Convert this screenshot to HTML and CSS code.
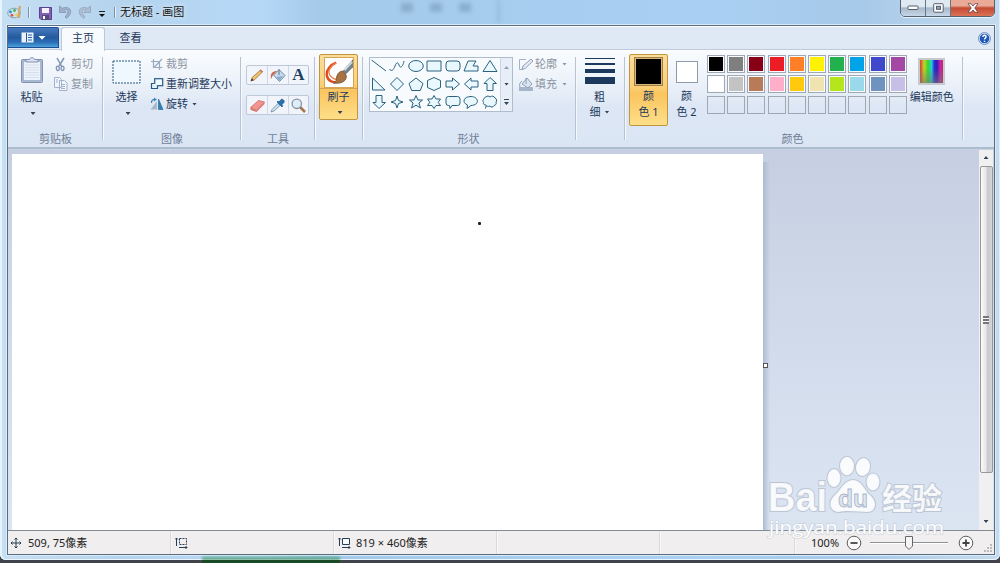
FILE: index.html
```html
<!DOCTYPE html>
<html lang="zh-CN">
<head>
<meta charset="utf-8">
<title>无标题 - 画图</title>
<link rel="stylesheet" href="styles.css">
</head>
<body>
<div class="window">
  <header class="titlebar">
    <svg class="app-icon" width="18" height="18" viewBox="0 0 18 18"><ellipse cx="7" cy="10" rx="6.300" ry="4.800" fill="#cfe3ec" stroke="#7ca7bc"/><circle cx="3.500" cy="9" r="1.400" fill="#3a8fd0"/><circle cx="7.500" cy="7.500" r="1.400" fill="#4caf50"/><circle cx="5" cy="12.300" r="1.400" fill="#d8534a"/><circle cx="9.500" cy="12" r="1.300" fill="#f5c542"/><path d="M13 3l-1 6v6" stroke="#d6a568" stroke-width="2.200" fill="none"/></svg>
    <i class="tick"></i>
    <svg class="save" width="13" height="13" viewBox="0 0 13 13"><path d="M.5.5h12v12H2L.5 11z" fill="#8460b4" stroke="#57438d"/><path d="M3 1h7v5H3z" fill="#f4f1fa"/><path d="M3 8h7v5H3z" fill="#554980"/><path d="M4 9h2v3H4z" fill="#fff"/></svg>
    <svg class="undo" width="13" height="14" viewBox="0 0 13 14"><path d="M.5 1v6.500h6.500L4.800 5.200C9 3.500 10.500 7 6 12l1.500 1.300C15 7.500 12 0 3 3.300z" fill="#a0b0ca" stroke="#8799b5" stroke-width=".9"/></svg>
    <svg class="redo" width="13" height="14" viewBox="0 0 13 14"><path d="M12.500 1v6.500H6l2.200-2.300C4 3.500 2.500 7 7 12l-1.500 1.300C-2 7.500 1 0 10 3.300z" fill="#afbfd3" stroke="#93a6bf" stroke-width=".9"/></svg>
    <svg class="qat" width="8" height="7" viewBox="0 0 8 7"><path d="M1 .5h6" stroke="#222"/><path d="M1 3h6L4 6z" fill="#111"/></svg>
    <i class="tick"></i>
    <h1 class="title">无标题 - 画图</h1>
    <div class="ghost"><b></b><b></b><b></b></div>
    <div class="controls">
      <button class="ctl"><svg width="13" height="6"><rect x="1" y="1" width="10" height="3.500" rx=".7" fill="#fff" stroke="#535d6c"/></svg></button>
      <button class="ctl"><svg width="11" height="10"><rect x=".7" y=".7" width="9.500" height="8.500" rx=".7" fill="#fff" stroke="#535d6c"/><rect x="3.500" y="3.300" width="4" height="3" fill="#8fa5be" stroke="#535d6c"/></svg></button>
      <button class="ctl close"><svg width="12" height="10" viewBox="0 0 12 10"><path d="M1 .7h3l2 2.400L8 .7h3L7.700 5 11 9.300H8L6 7 4 9.300H1L4.300 5z" fill="#fff" stroke="#67424a" stroke-width=".8"/></svg></button>
    </div>
  </header>

  <main class="client">
    <nav class="tabs">
      <button class="file"><svg width="25" height="12" viewBox="0 0 25 12"><rect x=".5" y=".5" width="12" height="10" fill="#e9f1fc"/><path d="M5.500 1v9M7 3h4M7 5.500h4M7 8h4" stroke="#285b9e"/><path d="M17.500 4h7L21 7.700z" fill="#fff"/></svg></button>
      <span class="tab active">主页</span>
      <span class="tab">查看</span>
      <svg class="help" width="13" height="13" viewBox="0 0 13 13"><circle cx="6.500" cy="6.500" r="6" fill="#dce9f6" stroke="#7094c4"/><circle cx="6.500" cy="6.500" r="4.800" fill="#2158b6"/><path d="M4.800 5C5 2.500 8.500 3 8 5c-.2 1-1.500 1-1.500 2.500M6.500 8.700v1.200" fill="none" stroke="#fff" stroke-width="1.400"/></svg>
    </nav>

    <section class="ribbon">
      <div class="group clipboard">
        <div class="content">
          <div class="big paste">
            <svg width="24" height="28" viewBox="0 0 24 28"><rect x="1.500" y="3.500" width="21" height="23" rx="1" fill="#a9b8d1" stroke="#8292b0"/><path d="M4 6h16v18H4z" fill="#edf2fa"/><path d="M5 9h14M5 11.500h14M5 14h14M5 16.500h14M5 19h14M5 21.500h14" stroke="#d5dfed"/><path d="M6 6V3.500h3.500C10 1 14 1 14.500 3.500H18V6z" fill="#dbe3ef" stroke="#8292b0"/></svg>
            <span>粘贴</span><i class="caret"></i>
          </div>
          <div class="list">
            <div class="cmd off"><svg width="15" height="15" viewBox="0 0 15 15"><path d="M4 1l4.500 8M11 1L6 9" stroke="#8195b5" stroke-width="1.500" fill="none"/><ellipse cx="4.800" cy="11.300" rx="1.500" ry="2.200" fill="none" stroke="#8195b5" stroke-width="1.300"/><ellipse cx="9.500" cy="11.300" rx="1.500" ry="2.200" fill="none" stroke="#8195b5" stroke-width="1.300"/></svg><span>剪切</span></div>
            <div class="cmd off"><svg width="15" height="16" viewBox="0 0 15 16"><path d="M1.500 1.500h5l2 2v8h-7zM6.500 4.500h5l2.500 2.500v7.500H6.500z" fill="#f0f4fb" stroke="#a4b3cc"/><path d="M3 4h2M3 6h2M8 8.500h4M8 10.500h4M8 12.500h4" stroke="#a4b3cc"/></svg><span>复制</span></div>
          </div>
        </div>
        <div class="label">剪贴板</div>
      </div>

      <div class="group image">
        <div class="content">
          <div class="big select">
            <svg width="29" height="24" viewBox="0 0 29 24"><rect x="1" y="1" width="27" height="22" fill="#eff8ff" stroke="#2b587c" stroke-dasharray="2 1"/></svg>
            <span>选择</span><i class="caret"></i>
          </div>
          <div class="list">
            <div class="cmd off"><svg width="14" height="14" viewBox="0 0 14 14"><path d="M3.500 2v8.500h9M1 4.500h8.500V13M4 10.500L12 2" fill="none" stroke="#99a9c0" stroke-width="1.200"/></svg><span>裁剪</span></div>
            <div class="cmd"><svg width="14" height="14" viewBox="0 0 14 14"><rect x="4.700" y="1.700" width="8" height="7" fill="#eef8ff" stroke="#275984" stroke-width="1.200"/><path d="M4.500 6.500h-3v5h6V9" fill="#e4f3fc" stroke="#275984" stroke-width="1.200"/></svg><span>重新调整大小</span></div>
            <div class="cmd"><svg width="14" height="14" viewBox="0 0 14 14"><path d="M7 4v8.500H.5z" fill="#a9bac7"/><path d="M8.500 2v10.500H13z" fill="#2c80b7" stroke="#235f8e" stroke-width=".6"/><path d="M1.500 6C1.500 3 2.500 2.500 5 2.500" fill="none" stroke="#3b87bb" stroke-width="1.300"/><path d="M4 .5L6.800 2.500 4 4.500z" fill="#3b87bb"/></svg><span>旋转</span><i class="caret"></i></div>
          </div>
        </div>
        <div class="label">图像</div>
      </div>

      <div class="group tools">
        <div class="content">
          <div class="toolrow">
            <b><svg width="16" height="16" viewBox="0 0 17 17"><path d="M2 15l1.500-4L12.500 3 14.500 5 6 13.500z" fill="#f0c16e" stroke="#a47943" stroke-width=".9"/><path d="M2 15l1-3 2 2z" fill="#333"/><path d="M11.500 4l2 2 1-1-2-2z" fill="#cb7264"/></svg></b>
            <b><svg width="17" height="17" viewBox="0 0 17 17"><path d="M4.500 8L10 2.500l6 6-5.500 6z" fill="#c7dbe9" stroke="#698ba6"/><path d="M10 2.500V8" stroke="#597789"/><path d="M8 4C4 4 1 6 2 12l2-4z" fill="#d0624a"/><path d="M7 10l7-1-3.500 4.500z" fill="#85acd0"/></svg></b>
            <b class="letter">A</b>
          </div>
          <div class="toolrow">
            <b><svg width="17" height="17" viewBox="0 0 17 17"><path d="M1.500 10.500l8-7 6 1.500-8 8.500z" fill="#f1958e" stroke="#c56b68" stroke-width=".8"/><path d="M1.500 10.500l6 3v1.500l-6-2zM7.500 13.500l8-8.500v2l-8 8z" fill="#d77873"/></svg></b>
            <b><svg width="17" height="17" viewBox="0 0 17 17"><path d="M2 15l1-2.500L9 6.500 11 8.500 5 14z" fill="#cae1ee" stroke="#718c9f" stroke-width=".8"/><path d="M8 5l5 5 .8-1.200-1-1L15 5.500c1-2-1.500-4-3-3L10 5l-1-1z" fill="#2771ac" stroke="#184f87" stroke-width=".6"/></svg></b>
            <b><svg width="17" height="17" viewBox="0 0 17 17"><path d="M10 10l5 5" stroke="#a7734a" stroke-width="2.500"/><circle cx="6.800" cy="6.800" r="4.700" fill="#deedf7" stroke="#8495a8" stroke-width="1.300"/></svg></b>
          </div>
        </div>
        <div class="label">工具</div>
      </div>

      <div class="group brushes">
        <div class="brush">
          <svg width="30" height="31" viewBox="0 0 30 31"><path d="M0 0h30v31H0z" fill="#fff"/><path d="M12 5C6 7 1 13 2 19s7 8 13 6" fill="none" stroke="#de4d20" stroke-width="2.600"/><path d="M12 5C4 10 3 15 5 18s5 5 9 5" fill="none" stroke="#f47c48" stroke-width="1.400"/><path d="M19 14L30 1v9l-8 8z" fill="#75828a"/><path d="M21 13l8-9" stroke="#d3dce2" stroke-width="2"/><path d="M12 24c0-6 3-10 7-10l4 5c0 5-4 8-10 8l-4 0z" fill="#a77142" stroke="#744a2c" stroke-width=".8"/></svg>
          <span>刷子</span><i class="caret"></i>
        </div>
      </div>

      <div class="group shapes">
        <div class="content">
          <div class="gallery">
            <div class="grid">
              <svg viewBox="0 0 18 18"><path d="M1.500 3l14.500 11"/></svg>
              <svg viewBox="0 0 18 18"><path d="M1.500 12c2 3 4 1 5.500-3s3-4 4-1c1 4 4 2 5-4"/></svg>
              <svg viewBox="0 0 18 18"><ellipse cx="9" cy="9" rx="7.300" ry="5.500"/></svg>
              <svg viewBox="0 0 18 18"><path d="M2 4h14v10H2z"/></svg>
              <svg viewBox="0 0 18 18"><rect x="2" y="4" width="14" height="10" rx="3"/></svg>
              <svg viewBox="0 0 18 18"><path d="M6 4h8l-3 5h5v5H2z"/></svg>
              <svg viewBox="0 0 18 18"><path d="M9 3.500l7 11H2z"/></svg>
              <svg viewBox="0 0 18 18"><path d="M2.500 3v12H15z"/></svg>
              <svg viewBox="0 0 18 18"><path d="M9 2.500L15.500 9 9 15.500 2.500 9z"/></svg>
              <svg viewBox="0 0 18 18"><path d="M9 3l7 5.500-2.700 7H4.700L2 8.500z"/></svg>
              <svg viewBox="0 0 18 18"><path d="M9 2.500l6.500 3v7L9 15.500l-6.500-3v-7z"/></svg>
              <svg viewBox="0 0 18 18"><path d="M2 6h6.500V3l7 6-7 6v-3H2z"/></svg>
              <svg viewBox="0 0 18 18"><path d="M16 6H9V3L2.500 9 9 15v-3h7z"/></svg>
              <svg viewBox="0 0 18 18"><path d="M6 15.500v-7H3l6-6 6.500 6h-3.500v7z"/></svg>
              <svg viewBox="0 0 18 18"><path d="M6 2.500v7H3l6 6 6.500-6h-3.500v-7z"/></svg>
              <svg viewBox="0 0 18 18"><path d="M9 3l1.500 4.500L15 9l-4.500 1.500L9 15l-1.500-4.500L3 9l4.500-1.500z"/></svg>
              <svg viewBox="0 0 18 18"><path d="M9 2.500L11 7h4.500l-3.600 3 1.600 5L9 12.200 4.500 15l1.600-5L2.500 7H7z"/></svg>
              <svg viewBox="0 0 18 18"><path d="M9 2.500l2 3.500h4.500l-2.300 3.300 2.300 3.200H11l-2 3-2-3H2.500l2.300-3.200L2.500 6H7z"/></svg>
              <svg viewBox="0 0 18 18"><path d="M4.500 3.500h9q2.500 0 2.500 2.500v4q0 2.500-2.500 2.500H8L6 15.500l-.5-3h-1Q2 12.500 2 10V6q0-2.500 2.500-2.500z"/></svg>
              <svg viewBox="0 0 18 18"><path d="M5 15.500l.5-3.500C-.5 9.500 1.500 3.500 9 3.500s9.500 8.500 0 9z"/></svg>
              <svg viewBox="0 0 18 18"><path d="M5 4c1-1.500 3-1 4 0 2-1.500 4-1 5 1 2 1 2 3 1 4 1 2-1 3.500-2 3.500-1 2-3 2-4 .5-2 1-4 0-4-1-2 0-3-1-2.500-2.500-1-1.500-.5-3 .5-3.500C3 5 4 4 5 4zM5 13l-.5 2.500"/></svg>
            </div>
            <div class="scroll"><i class="up"></i><i class="caret"></i><i class="caret more"></i></div>
          </div>
          <div class="list">
            <div class="cmd off"><svg width="16" height="16" viewBox="0 0 16 16"><path d="M8 3.500H1.500v10H5" fill="none" stroke="#a3b2c9"/><path d="M4 13.500l1-3.500 8-7 2 2-8 7.500z" fill="#e5ebf5" stroke="#8d9eb9"/></svg><span>轮廓</span><i class="caret"></i></div>
            <div class="cmd off"><svg width="16" height="16" viewBox="0 0 16 16"><path d="M1 11h14v4H1z" fill="#a5b5cc"/><path d="M4 8l5-6 5 6-4 4z" fill="#dbe3ef" stroke="#8d9eb9"/><path d="M8 2v6M4 5c-2 1-3 4-2 6" stroke="#8d9eb9" fill="none"/></svg><span>填充</span><i class="caret"></i></div>
          </div>
        </div>
        <div class="label">形状</div>
      </div>

      <div class="group weight">
        <div class="lines"><i></i><i></i><i></i><i></i></div>
        <span>粗</span><span class="second">细 <i class="caret"></i></span>
      </div>

      <div class="group colors">
        <div class="content">
          <div class="slot on"><i class="chip black"></i><span>颜</span><span>色 1</span></div>
          <div class="slot"><i class="chip white"></i><span>颜</span><span>色 2</span></div>
          <div class="palette">
            <i style="background:#000"></i><i style="background:#7f7f7f"></i><i style="background:#880015"></i><i style="background:#ed1c24"></i><i style="background:#ff7f27"></i><i style="background:#fff200"></i><i style="background:#22b14c"></i><i style="background:#00a2e8"></i><i style="background:#3f48cc"></i><i style="background:#a349a4"></i>
            <i style="background:#fff"></i><i style="background:#c3c3c3"></i><i style="background:#b97a57"></i><i style="background:#ffaec9"></i><i style="background:#ffc90e"></i><i style="background:#efe4b0"></i><i style="background:#b5e61d"></i><i style="background:#99d9ea"></i><i style="background:#7092be"></i><i style="background:#c8bfe7"></i>
            <i class="empty"></i><i class="empty"></i><i class="empty"></i><i class="empty"></i><i class="empty"></i><i class="empty"></i><i class="empty"></i><i class="empty"></i><i class="empty"></i><i class="empty"></i>
          </div>
          <div class="edit"><i class="spectrum"></i><span>编辑颜色</span></div>
        </div>
        <div class="label">颜色</div>
      </div>
    </section>

    <section class="workspace">
      <div class="board">
        <div class="canvas"><i class="dot"></i><i class="handle"></i></div>
        <div class="shade"></div>
      </div>
      <div class="vscroll"><i class="up"></i><div class="thumb"><i class="grip"></i></div><i class="caret"></i></div>
    </section>

    <footer class="status">
      <div class="cell"><svg width="12" height="12" viewBox="0 0 12 12"><path d="M6 1v10M1 6h10M4.500 2.500L6 1l1.500 1.500M4.500 9.500L6 11l1.500-1.500M2.500 4.500L1 6l1.500 1.500M9.500 4.500L11 6 9.500 7.500" fill="none" stroke="#263e55"/></svg><span>509, 75像素</span></div>
      <div class="cell"><svg width="13" height="12" viewBox="0 0 13 12"><path d="M4.500 1.500h7v6h-7z" fill="none" stroke="#263e55" stroke-dasharray="2 1"/><path d="M1.500 1v8M0 2.500L1.500 1 3 2.500M4 10.500h8M10.500 9l1.500 1.500-1.500 1.500" stroke="#263e55" fill="none"/></svg></div>
      <div class="cell"><svg width="13" height="12" viewBox="0 0 13 12"><path d="M4.500 1.500h7v6h-7z" fill="#f5fbff" stroke="#263e55"/><path d="M1.500 1v8M0 2.500L1.500 1 3 2.500M4 10.500h8M10.500 9l1.500 1.500-1.500 1.500" stroke="#263e55" fill="none"/></svg><span>819 × 460像素</span></div>
      <div class="cell"></div>
      <div class="cell short"></div>
      <div class="zoom">
        <span>100%</span>
        <svg width="16" height="16" viewBox="0 0 16 16"><circle cx="8" cy="8" r="6.800" fill="#fafafa" stroke="#5d5d61"/><path d="M4.500 8h7" stroke="#444" stroke-width="1.800"/></svg>
        <div class="track"><svg width="10" height="16" viewBox="0 0 10 16"><path d="M1.500 1.500h7v9.500L5 14.500 1.500 11z" fill="#f5f5f5" stroke="#66696c"/></svg></div>
        <svg width="16" height="16" viewBox="0 0 16 16"><circle cx="8" cy="8" r="6.800" fill="#fafafa" stroke="#5d5d61"/><path d="M4.500 8h7M8 4.500v7" stroke="#444" stroke-width="1.800"/></svg>
      </div>
      <svg class="resize" width="10" height="10" viewBox="0 0 10 10"><path d="M7 1h2v2H7zM4 4h2v2H4zM7 4h2v2H7zM1 7h2v2H1zM4 7h2v2H4zM7 7h2v2H7z" fill="#bbb"/></svg>
    </footer>
  </main>
</div>
<div class="desktop"><i></i></div>

<svg class="watermark" width="184" height="90" viewBox="0 0 184 90">
  <g fill="#fff" fill-opacity=".85" stroke="#bcc6d6" stroke-width="2" paint-order="stroke">
    <text x="3" y="61" font-size="40" textLength="59" lengthAdjust="spacingAndGlyphs" class="wm-logo">Bai</text>
    <ellipse cx="69" cy="28" rx="6.500" ry="9"/><ellipse cx="82" cy="16" rx="7" ry="9.300"/><ellipse cx="98" cy="17" rx="7" ry="9" transform="rotate(12 98 17)"/><ellipse cx="108" cy="32" rx="6.500" ry="8.500"/>
    <path d="M88 30c9 0 11 10 17 15 8 7 6 17-3 17-7 0-20-2-28 0-9 0-12-10-4-17 6-5 9-15 18-15z"/>
    <text x="117" y="59" font-size="30" textLength="60" lengthAdjust="spacingAndGlyphs" class="wm-cn">经验</text>
  </g>
  <text x="73" y="57" font-size="23" textLength="30" lengthAdjust="spacingAndGlyphs" class="wm-du">du</text>
  <text x="4" y="84" font-size="19" textLength="175" lengthAdjust="spacingAndGlyphs" class="wm-url">jingyan.baidu.com</text>
</svg>
</body>
</html>
```
FILE: styles.css
```css
* { box-sizing: border-box; }
body {
  margin: 0; width: 1000px; height: 563px; overflow: hidden; position: relative;
  font: 11px/16px "Noto Sans", "Noto Sans CJK SC", sans-serif; color: #1e395b;
  background: #404349; display: flex; flex-direction: column;
}
i, b { font-style: normal; font-weight: normal; display: block; }
svg { display: block; flex: none; }
button { padding: 0; border: 0; font: inherit; }
span { white-space: nowrap; }

.window {
  height: 560px; padding: 0 5px 5px 7px; border-radius: 0 0 6px 6px;
  background: linear-gradient(90deg, #c6dff3, #b4d3ed 12%, #b6d8f7 26%, #a4caea 32%, #a9d0f3 70%, #a7c9e9 86%, #c5dbed);
  box-shadow: inset 2px 0 #e5f4ff, inset -1px 0 #dceeff, inset 0 -1px #eaf5ff;
}
.titlebar { height: 25px; display: flex; align-items: flex-start; position: relative; }
.app-icon { margin: 3px 3px 0 0; }
.tick { width: 1px; height: 11px; margin-top: 7px; background: #7f91a5; box-shadow: 1px 0 #e6f2fb; }
.save { margin: 7px 0 0 10px; }
.undo { margin: 5px 0 0 7px; }
.redo { margin: 5px 0 0 6px; }
.qat { margin: 11px 8px 0 7px; }
.title { width: 68px; white-space: nowrap; margin: 4px 0 0 5px; font-size: 11px; font-weight: normal; line-height: 16px; color: #111; text-shadow: 0 0 5px #fff; }
.ghost { display: flex; gap: 17px; padding: 3px 10px; margin-left: 203px; border-right: 3px solid #8eabc888; height: 23px; filter: blur(2px); width: 109px; }
.ghost b { width: 12px; height: 9px; background: #7594b388; flex: none; }
.controls { display: flex; margin: -1px 0 0 auto; border: 1px solid #556370; border-radius: 0 0 5px 5px; overflow: hidden; height: 18px; width: 95px; box-shadow: 0 1px #e3f2ff; }
.ctl { width: 25px; display: grid; place-items: center; border-right: 1px solid #667684; background: linear-gradient(#dfe9f2 0 40%, #a9b9cb 50%, #c6d7e7); }
.close { width: 43px; border: 0; background: linear-gradient(#e9aa98 0 35%, #c44b32 50%, #dc7256); }

.client { height: 530px; border: 1px solid #596d80; display: flex; flex-direction: column; background: #dfe9f5; box-shadow: 0 0 0 1px #dcebf8; }
.tabs { height: 24px; display: flex; align-items: stretch; border-top: 1px solid #fff; border-bottom: 1px solid #c0cad8; }
.file { width: 51px; height: 21px; border: 1px solid #1d4b94; border-left: 0; border-radius: 0 2px 0 0; background: linear-gradient(#4779bd, #255a9f 50%, #2c6eb7 75%, #49a4d9); display: grid; place-items: center; }
.tab { width: 51px; text-align: center; line-height: 22px; }
.tab.active { width: 44px; height: 24px; margin-left: 2px; background: #f8fbfe; border: 1px solid #b9c8da; border-bottom: 0; border-radius: 3px 3px 0 0; line-height: 20px; z-index: 1; }
.help { margin: 5px 3px 0 auto; }

.ribbon { height: 99px; display: flex; background: linear-gradient(#fafcfe, #edf3fa 30%, #dce6f4 60%, #dbe6f5); border-bottom: 2px solid #aebcd0; }
.group { height: 97px; display: flex; flex-direction: column; flex: none; position: relative; }
.group::after { content: ""; position: absolute; right: 0; top: 7px; width: 1px; height: 83px; background: #b8c3d1; box-shadow: 1px 0 #f5f9fd; }
.clipboard { width: 95px; } .image { width: 138px; } .tools { width: 74px; }
.brushes { width: 48px; } .shapes { width: 213px; } .weight { width: 49px; } .colors { width: 338px; }
.content { height: 80px; display: flex; }
.label { text-align: center; color: #6f7e95; line-height: 17px; }
.caret { width: 5px; height: 3px; background: #344457; clip-path: polygon(0 0, 100% 0, 50% 100%); flex: none; }
.up { width: 5px; height: 3px; background: #344457; clip-path: polygon(50% 0, 100% 100%, 0 100%); }
.big { display: flex; flex-direction: column; align-items: center; }
.paste { width: 45px; padding: 6px 0 0 2px; }
.paste span { margin: 5px 0 7px; }
.paste .caret { margin-left: 3px; }
.select { width: 45px; padding: 10px 0 0 2px; }
.select span { margin: 5px 0 7px; }
.select .caret { margin-left: 3px; }
.list { padding-top: 4px; }
.cmd { height: 20px; display: flex; align-items: center; gap: 3px; }
.off { color: #8b94a2; }
.off .caret { background: #8d98a8; }
.cmd .caret { margin-left: 1px; }
.image .list { padding-left: 2px; }
.image .cmd { gap: 2px; }
.image .cmd .caret { margin-left: 2px; }

.tools .content { flex-direction: column; align-items: flex-start; padding: 15px 0 0 5px; gap: 10px; }
.toolrow { width: 63px; height: 20px; display: grid; grid-template-columns: repeat(3, 1fr); border: 1px solid #bdc9d8; border-radius: 2px; background: #f1f5fb; }
.toolrow b { display: grid; place-items: center; }
.toolrow b + b { border-left: 1px solid #ced8e5; }
.toolrow .letter { font: bold 17px/18px "Liberation Serif", serif; color: #203d62; }

.brush { margin: 4px 0 0 4px; width: 39px; height: 66px; border: 1px solid #c2963f; border-radius: 2px; background: linear-gradient(#fbdd9c, #fbd07b 45%, #fbc45e 55%, #fddf89); display: flex; flex-direction: column; align-items: center; padding-top: 2px; }
.brush svg { border: 1px solid #d5a557; }
.brush span { width: 100%; text-align: center; border-top: 1px solid #d1a35b; margin: 0 0 6px; }
.brush .caret { margin-left: 3px; }

.shapes .content { padding-left: 6px; gap: 5px; }
.gallery { width: 144px; height: 55px; margin-top: 7px; display: flex; border: 1px solid #aebccb; background: #f7fbfe; flex: none; }
.grid { display: grid; grid-template-columns: repeat(7, 18.450px); grid-auto-rows: 18px; width: 130px; margin-top: -1px; }
.grid svg { width: 18px; height: 18px; fill: #e9f8fd; stroke: #2c617e; stroke-width: 1; }
.grid svg:nth-child(2) { fill: none; }
.scroll { flex: 1; border-left: 1px solid #cbd5e2; display: flex; flex-direction: column; align-items: center; justify-content: space-between; padding: 8px 0 6px; background: #e7eef8; }
.scroll .up { background: #93a0b1; }
.more { height: 6px; clip-path: polygon(0 0, 100% 0, 100% 1px, 0 1px, 0 3px, 100% 3px, 50% 100%, 0 3px); }
.shapes .label { margin-right: 2px; }
.shapes .cmd { gap: 1px; }
.shapes .cmd .caret { margin-left: 4px; }

.weight { align-items: center; padding-top: 7px; }
.lines { width: 30px; height: 26px; display: flex; flex-direction: column; justify-content: space-between; margin: 1px 1px 5px 0; flex: none; }
.lines i { height: 1px; background: #1d395e; }
.lines i:nth-child(2) { height: 2px; margin-bottom: 1px; }
.lines i:nth-child(3) { height: 4px; }
.lines i:nth-child(4) { height: 7px; }
.weight > span { margin-right: 2px; line-height: 16px; }
.second { display: flex; align-items: center; gap: 4px; margin-top: -1px; }

.colors .content { padding: 4px 0 0 4px; align-items: flex-start; }
.slot { width: 39px; height: 72px; padding-top: 7px; display: flex; flex-direction: column; align-items: center; line-height: 16px; }
.slot.on { padding-top: 2px; border: 1px solid #c2963f; border-radius: 2px; background: linear-gradient(#fbdd9c, #fbd07b 45%, #fbc45e 55%, #fddf89); }
.slot .chip { margin-bottom: 5px; width: 22px; height: 22px; border: 1px solid #8d9aab; box-shadow: inset 0 0 0 1px #fff; background: #fff; }
.slot .black { width: 29px; height: 29px; margin-bottom: 2px; background: #000; border-color: #a37e3f; box-shadow: inset 0 0 0 1px #d7b77b; }
.slot.on + .slot { padding-right: 2px; }
.palette { display: grid; grid-template-columns: repeat(10, 18px); grid-auto-rows: 18px; gap: 2.300px 2.200px; margin: 1px 0 0; flex: none; }
.palette i { border: 1px solid #a0a8b2; box-shadow: inset 0 0 0 1px #f9fbff; }
.palette .empty { box-shadow: none; }
.edit { width: 50px; padding-top: 4px; display: flex; flex-direction: column; align-items: center; gap: 4px; }
.spectrum { width: 27px; height: 27px; border: 2px solid #c7c9ce; background: linear-gradient(#0000 35%, #7779) padding-box, linear-gradient(90deg, #cf4038, #c8d22a 18%, #30d92c 35%, #29cfd0 50%, #1f35dd 62%, #3a16a8 74%, #c423b4 88%, #c92a55); }
.colors .label { padding-right: 3px; }

.workspace { height: 381px; display: flex; background: linear-gradient(#c5cfe1, #d4deed 65%, #dbe5f2); border-top: 1px solid #c9d3e3; }
.board { flex: 1; padding: 4px 0 0 4px; display: flex; }
.canvas { width: 751px; background: #fff; position: relative; }
.shade { width: 7px; margin-top: 8px; background: linear-gradient(90deg, #aebbd0, #aebbd000); }
.dot { position: absolute; left: 466px; top: 68px; width: 3px; height: 3px; border-radius: 1px; background: #222; }
.handle { position: absolute; left: 751px; top: 209px; width: 5px; height: 5px; border: 1px solid #555; background: #fff; }
.vscroll { width: 14px; margin-right: 1px; background: #f0f0f1; display: flex; flex-direction: column; align-items: center; padding: 6px 0 7px; }
.vscroll .thumb { width: 13px; height: 307px; margin: 7px 0 auto; border: 1px solid #989898; border-radius: 2px; background: linear-gradient(90deg, #fafafa, #e7e7e8 45%, #c8c9cc 60%, #d6d6d8); display: grid; place-items: center; flex: none; }
.grip { width: 6px; height: 8px; background: repeating-linear-gradient(#777 0 2px, #f7f7f7 2px 3px); }

.status { height: 24px; border-top: 1px solid #848b94; background: #f0eeee; color: #222; display: flex; position: relative; font-size: 11px; }
.cell { width: 163px; padding-left: 2px; display: flex; align-items: center; gap: 6px; border-right: 1px solid #dcd9da; box-shadow: 1px 0 #faf8f8; flex: none; }
.cell + .cell { gap: 5px; padding-left: 4px; }
.cell.short { width: 135px; }
.zoom { display: flex; align-items: center; padding-left: 16px; }
.zoom > span { width: 35px; }
.zoom .track { width: 78px; height: 2px; margin: 0 10px 0 8px; background: linear-gradient(#8e9296 50%, #fff 50%); display: flex; align-items: center; justify-content: center; }
.resize { position: absolute; right: 1px; bottom: 1px; }
.desktop { height: 3px; padding-left: 202px; }
.desktop i { width: 138px; height: 3px; background: #174a25; box-shadow: 0 -3px 3px #54a37c; }

.watermark { position: absolute; left: 765px; top: 450px; }
.wm-logo { font-family: "Liberation Sans", sans-serif; font-weight: bold; }
.wm-cn { font-family: "Noto Sans CJK SC", sans-serif; font-weight: bold; }
.wm-du { font-family: "Liberation Sans", sans-serif; font-weight: bold; fill: #dde5f0; stroke: #aab6ca; stroke-width: .8; }
.wm-url { font-family: "Open Sans", sans-serif; fill: #fff; stroke: #c3cbd7; stroke-width: 1.5; stroke-opacity: .7; paint-order: stroke; }
```
